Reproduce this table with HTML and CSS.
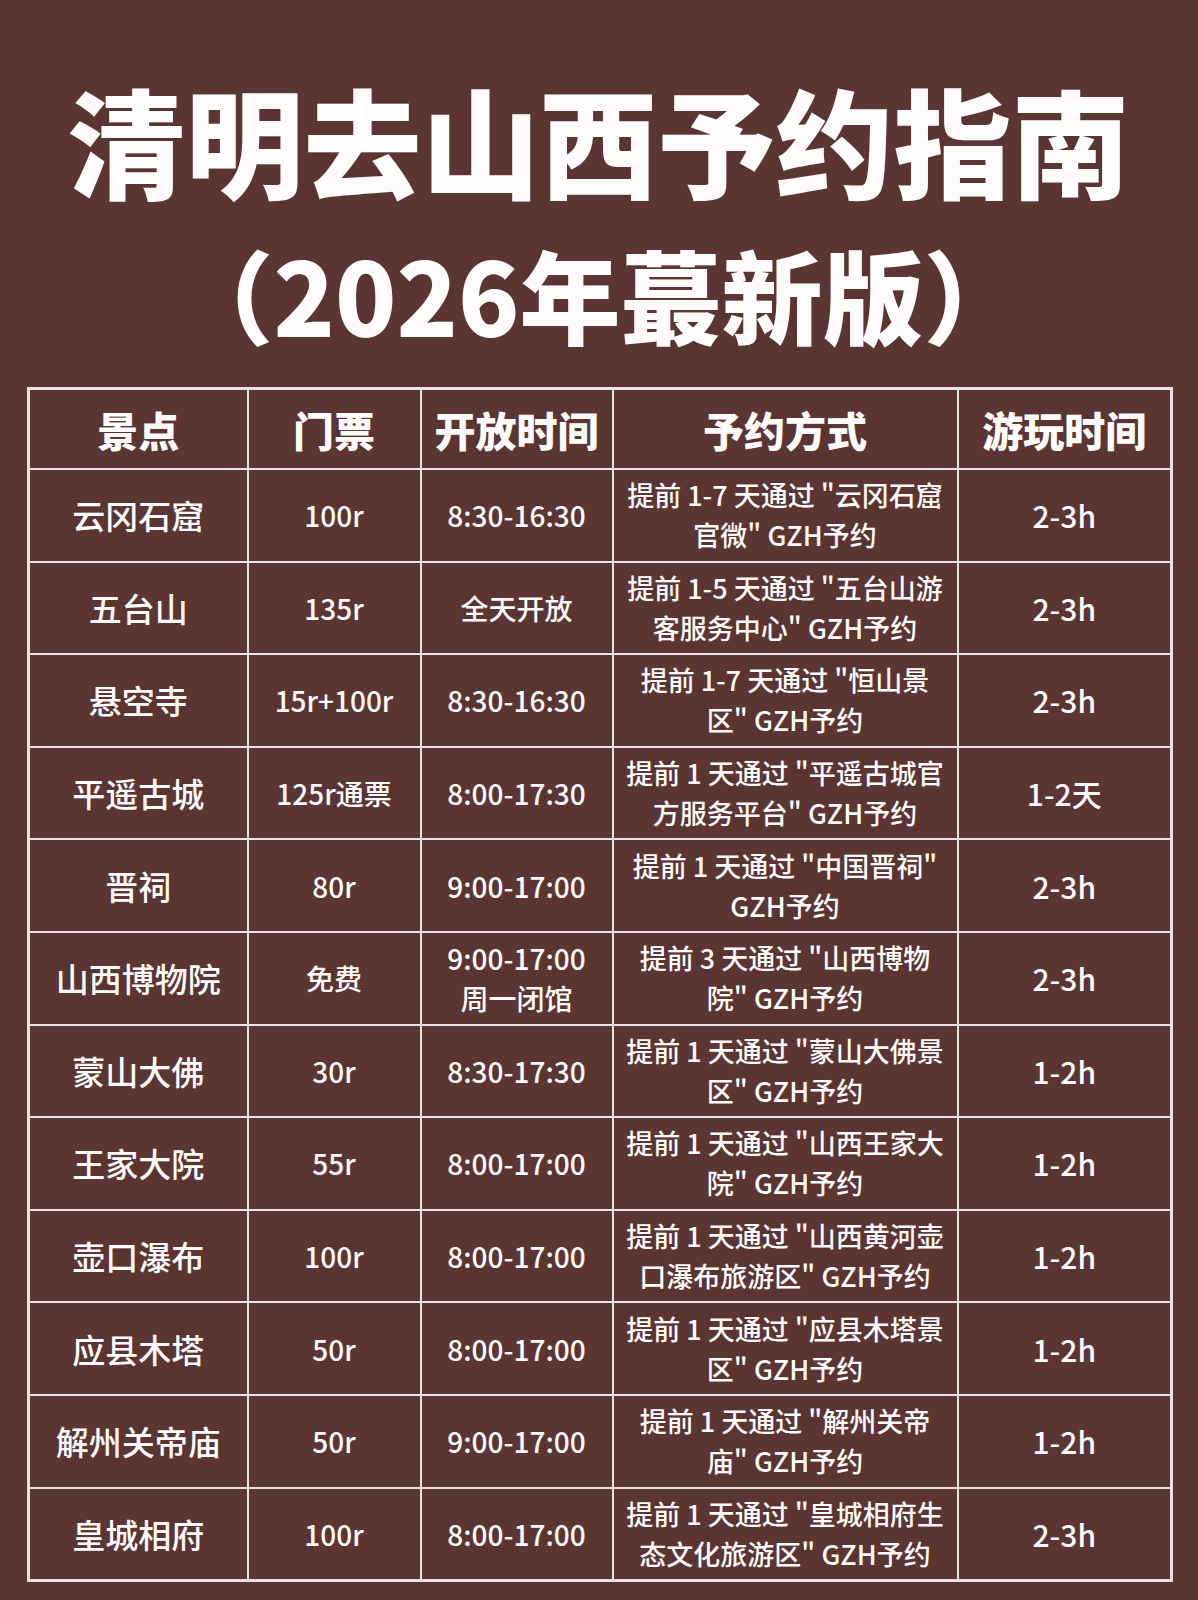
FILE: index.html
```html
<!DOCTYPE html>
<html lang="zh-CN">
<head>
<meta charset="utf-8">
<title>清明去山西予约指南</title>
<link rel="stylesheet" href="styles.css">
</head>
<body>
<div class="page">
  <h1 class="title">
    <span class="t1">清明去山西予约指南</span>
    <span class="t2">（2026年蕞新版）</span>
  </h1>
  <table class="guide">
    <colgroup>
      <col class="c1"><col class="c2"><col class="c3"><col class="c4"><col class="c5">
    </colgroup>
    <thead>
      <tr><th>景点</th><th>门票</th><th>开放时间</th><th>予约方式</th><th>游玩时间</th></tr>
    </thead>
    <tbody>
      <tr><td class="name">云冈石窟</td><td class="mid">100r</td><td class="mid">8:30-16:30</td><td class="way">提前 1-7 天通过 "云冈石窟<br>官微" GZH予约</td><td class="dur">2-3h</td></tr>
      <tr><td class="name">五台山</td><td class="mid">135r</td><td class="mid">全天开放</td><td class="way">提前 1-5 天通过 "五台山游<br>客服务中心" GZH予约</td><td class="dur">2-3h</td></tr>
      <tr><td class="name">悬空寺</td><td class="mid">15r+100r</td><td class="mid">8:30-16:30</td><td class="way">提前 1-7 天通过 "恒山景<br>区" GZH予约</td><td class="dur">2-3h</td></tr>
      <tr><td class="name">平遥古城</td><td class="mid">125r通票</td><td class="mid">8:00-17:30</td><td class="way">提前 1 天通过 "平遥古城官<br>方服务平台" GZH予约</td><td class="dur">1-2天</td></tr>
      <tr><td class="name">晋祠</td><td class="mid">80r</td><td class="mid">9:00-17:00</td><td class="way">提前 1 天通过 "中国晋祠"<br>GZH予约</td><td class="dur">2-3h</td></tr>
      <tr><td class="name">山西博物院</td><td class="mid">免费</td><td class="mid">9:00-17:00<br>周一闭馆</td><td class="way">提前 3 天通过 "山西博物<br>院" GZH予约</td><td class="dur">2-3h</td></tr>
      <tr><td class="name">蒙山大佛</td><td class="mid">30r</td><td class="mid">8:30-17:30</td><td class="way">提前 1 天通过 "蒙山大佛景<br>区" GZH予约</td><td class="dur">1-2h</td></tr>
      <tr><td class="name">王家大院</td><td class="mid">55r</td><td class="mid">8:00-17:00</td><td class="way">提前 1 天通过 "山西王家大<br>院" GZH予约</td><td class="dur">1-2h</td></tr>
      <tr><td class="name">壶口瀑布</td><td class="mid">100r</td><td class="mid">8:00-17:00</td><td class="way">提前 1 天通过 "山西黄河壶<br>口瀑布旅游区" GZH予约</td><td class="dur">1-2h</td></tr>
      <tr><td class="name">应县木塔</td><td class="mid">50r</td><td class="mid">8:00-17:00</td><td class="way">提前 1 天通过 "应县木塔景<br>区" GZH予约</td><td class="dur">1-2h</td></tr>
      <tr><td class="name">解州关帝庙</td><td class="mid">50r</td><td class="mid">9:00-17:00</td><td class="way">提前 1 天通过 "解州关帝<br>庙" GZH予约</td><td class="dur">1-2h</td></tr>
      <tr><td class="name">皇城相府</td><td class="mid">100r</td><td class="mid">8:00-17:00</td><td class="way">提前 1 天通过 "皇城相府生<br>态文化旅游区" GZH予约</td><td class="dur">2-3h</td></tr>
    </tbody>
  </table>
</div>
</body>
</html>
```
FILE: styles.css
```css
html, body {
  margin: 0;
  padding: 0;
  background: #5b3532;
}
body {
  font-family: "Noto Sans CJK SC", "Noto Sans", sans-serif;
  color: #fdfbfb;
}
.page {
  width: 1198px;
  min-height: 1600px;
  box-sizing: border-box;
  padding: 60px 28px 0 27px;
  background: #5b3532;
}
.title {
  margin: 0;
  text-align: center;
  font-weight: 900;
}
.t1 {
  display: block;
  font-size: 118px;
  line-height: 158px;
}
.t2 {
  display: block;
  font-size: 101px;
  line-height: 150px;
}
.guide {
  margin-top: 19px;
  width: 1143px;
  border-collapse: collapse;
  table-layout: fixed;
  border: 3px solid #e9e3e2;
}
.c1 { width: 219px; }
.c2 { width: 173px; }
.c3 { width: 192px; }
.c4 { width: 345px; }
.c5 { width: 214px; }
.guide th, .guide td {
  border: 2px solid #e9e3e2;
  text-align: center;
  vertical-align: middle;
  padding: 0;
}
.guide th {
  height: 78px;
  font-size: 41px;
  font-weight: 900;
  line-height: 1;
}
.guide td {
  height: 90.6px;
  font-weight: 500;
}
.name {
  font-size: 33px;
}
.mid {
  font-size: 28px;
  line-height: 40px;
}
.way {
  font-size: 27px;
  line-height: 40px;
}
.dur {
  font-size: 30px;
}
```
